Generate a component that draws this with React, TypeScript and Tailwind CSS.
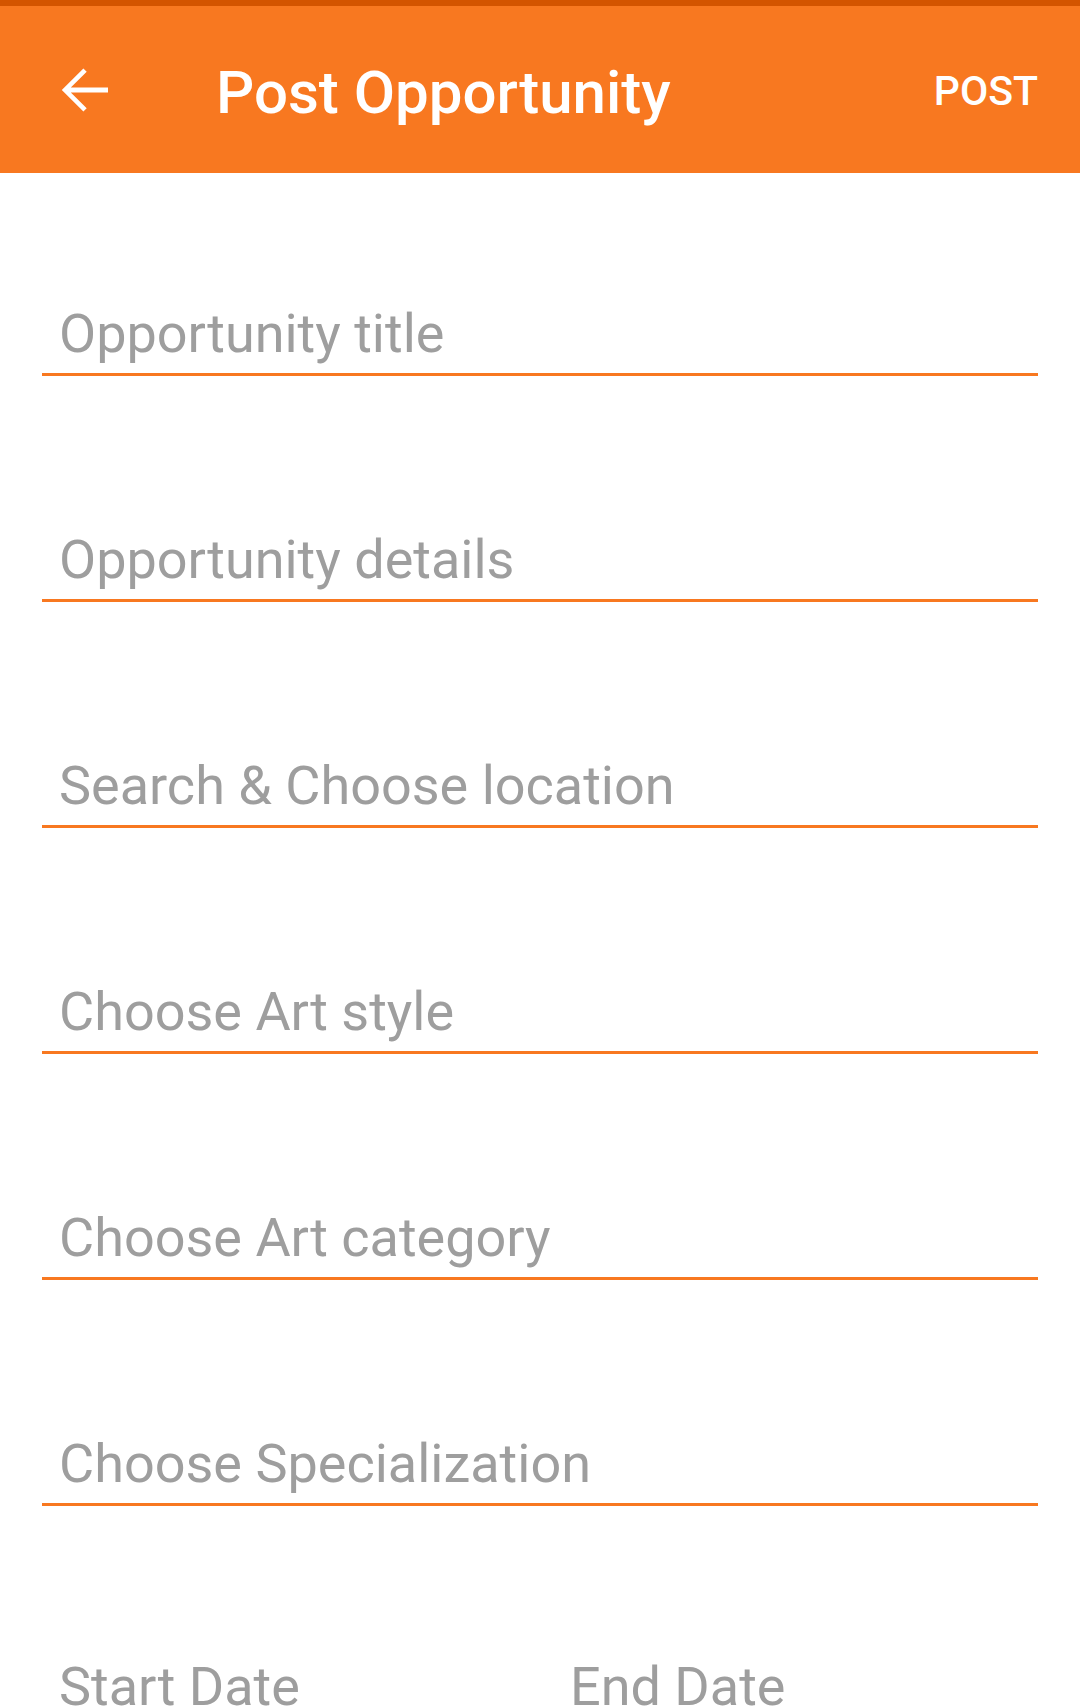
import React from "react";

const fields: { label: string; mt: string }[] = [
  { label: "Opportunity title", mt: "mt-[129px]" },
  { label: "Opportunity details", mt: "mt-[152px]" },
  { label: "Search & Choose location", mt: "mt-[152px]" },
  { label: "Choose Art style", mt: "mt-[152px]" },
  { label: "Choose Art category", mt: "mt-[152px]" },
  { label: "Choose Specialization", mt: "mt-[152px]" },
];

export default function App() {
  return (
    <div
      className="w-[1080px] h-[1708px] overflow-hidden bg-white"
      style={{ fontFamily: "Roboto, 'Noto Sans', sans-serif" }}
    >
      <div className="h-[6px] bg-[#d35400]" />
      <div className="h-[167px] bg-[#f87820] flex items-center text-white">
        <div className="w-[168px] pl-[48px] flex items-center">
          <svg width="72" height="72" viewBox="0 0 24 24" fill="#ffffff">
            <path d="M20 11.2H7.6l5.3-5.3L11.8 4.8 4.6 12l7.2 7.2 1.1-1.1-5.3-5.3H20v-1.6z" />
          </svg>
        </div>
        <div className="ml-[48px] text-[60px] leading-[70px] font-medium mb-[-6px]">
          Post Opportunity
        </div>
        <div className="ml-auto mr-[42px] text-[41px] leading-[48px] font-medium mb-[-2px]">
          POST
        </div>
      </div>
      <div className="px-[42px]">
        {fields.map((f) => (
          <div key={f.label} className={f.mt}>
            <div className="pl-[17px] pb-[8px] border-b-[3px] border-[#f87820] text-[54px] leading-[63px] text-[#9e9e9e]">
              {f.label}
            </div>
          </div>
        ))}
        <div className="mt-[149px] flex text-[54px] leading-[63px] text-[#9e9e9e]">
          <div className="pl-[17px] w-[528px]">Start Date</div>
          <div>End Date</div>
        </div>
      </div>
    </div>
  );
}
